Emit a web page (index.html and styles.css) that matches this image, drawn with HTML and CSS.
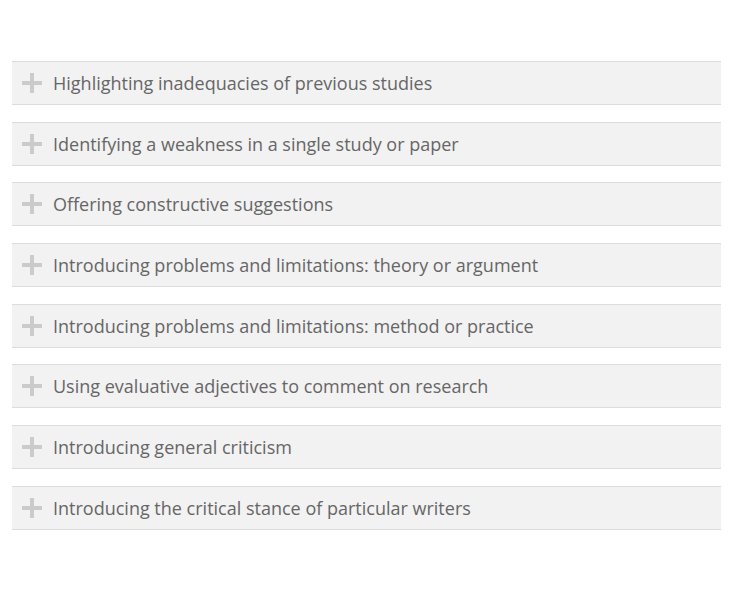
FILE: index.html
```html
<!DOCTYPE html>
<html>
<head>
<meta charset="utf-8">
<link rel="stylesheet" href="styles.css">
</head>
<body>
<div class="accordion">
  <div class="item"><span class="plus"></span><span class="title">Highlighting inadequacies of previous studies</span></div>
  <div class="item"><span class="plus"></span><span class="title">Identifying a weakness in a single study or paper</span></div>
  <div class="item"><span class="plus"></span><span class="title">Offering constructive suggestions</span></div>
  <div class="item"><span class="plus"></span><span class="title">Introducing problems and limitations: theory or argument</span></div>
  <div class="item"><span class="plus"></span><span class="title">Introducing problems and limitations: method or practice</span></div>
  <div class="item"><span class="plus"></span><span class="title">Using evaluative adjectives to comment on research</span></div>
  <div class="item"><span class="plus"></span><span class="title">Introducing general criticism</span></div>
  <div class="item"><span class="plus"></span><span class="title">Introducing the critical stance of particular writers</span></div>
</div>
</body>
</html>
```
FILE: styles.css
```css
html, body {
  margin: 0;
  padding: 0;
  background: #fff;
}
body {
  font-family: "Open Sans", "Liberation Sans", sans-serif;
}
.accordion {
  padding: 61px 10px 0 12px;
  display: flex;
  flex-direction: column;
  gap: 16.7px;
}
.item {
  height: 42px;
  background: #f2f2f2;
  border-top: 1px solid #dcdcdc;
  border-bottom: 1px solid #dcdcdc;
  display: flex;
  align-items: center;
  padding-left: 10px;
}
.plus {
  position: relative;
  width: 20px;
  height: 20px;
  flex: none;
  margin-right: 11px;
}
.plus::before, .plus::after {
  content: "";
  position: absolute;
  background: #cbcbcb;
}
.plus::before {
  left: 0; right: 0; top: 8px; height: 4px;
}
.plus::after {
  top: 0; bottom: 0; left: 8px; width: 4px;
}
.title {
  font-size: 18px;
  color: #666;
  line-height: 24px;
}
```
